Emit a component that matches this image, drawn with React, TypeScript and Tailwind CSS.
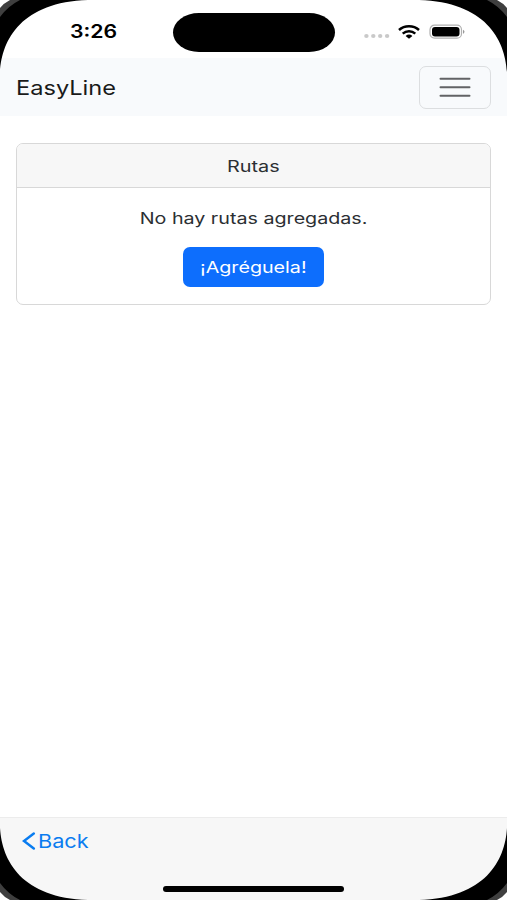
import { useState } from "react";

const corners = [
  "top-0 left-0",
  "top-0 right-0 -scale-x-100",
  "bottom-0 left-0 -scale-y-100",
  "bottom-0 right-0 -scale-100",
];

function Corner({ className }: { className: string }) {
  return (
    <svg className={`absolute pointer-events-none w-[100px] h-[76px] ${className}`} viewBox="0 0 100 76" fill="none">
      <path d="M0 72C2 39 22 2 88 0H0Z" fill="#000" />
      <path d="M0 17Q8 6 20 0H0Z" fill="#3f3f3f" />
      <path d="M0 8Q4 3 10 0H0Z" fill="#fff" />
    </svg>
  );
}

function StatusBar() {
  return (
    <div className="flex items-center h-[58px]">
      <div className="w-[173px] pl-[70px] pt-[6px]">
        <span className="inline-block origin-left scale-x-[1.18] text-[18px] leading-6 font-semibold text-black">3:26</span>
      </div>
      <div className="w-[162px] h-[39px] mt-[6px] rounded-[26px/19.5px] bg-black" />
      <div className="flex items-center ml-[29px] mt-[5px]">
        <svg width="26" height="6" viewBox="0 0 26 6" fill="#c9c9c9" className="mt-[9px]">
          <ellipse cx="2.4" cy="3" rx="2.2" ry="2" />
          <ellipse cx="9.3" cy="3" rx="2.2" ry="2" />
          <ellipse cx="16.2" cy="3" rx="2.2" ry="2" />
          <ellipse cx="23.1" cy="3" rx="2.2" ry="2" />
        </svg>
        <svg width="22" height="14" viewBox="0 0 22 14" fill="none" stroke="#000" strokeWidth="2.5" className="ml-[8px]">
          <path d="M1 5C6.5 .1 15.5 .1 21 5" />
          <path d="M4.7 8.6C8.3 5.4 13.7 5.4 17.3 8.6" />
          <path d="M7.6 10.9Q11 8.2 14.4 10.9L11 13.7Z" fill="#000" stroke="none" />
        </svg>
        <svg width="37" height="16" viewBox="0 0 37 16" fill="none" className="ml-[9px]">
          <rect x="1" y="1.2" width="31.5" height="13" rx="4.5" stroke="#b0b0b0" strokeWidth="1.2" />
          <rect x="3" y="3" width="27.5" height="9.6" rx="3" fill="#000" />
          <path d="M34 5.7Q37 7.7 34 9.9Z" fill="#999" />
        </svg>
      </div>
    </div>
  );
}

export default function App() {
  const [open, setOpen] = useState(false);

  return (
    <div className="relative flex flex-col w-full h-screen overflow-hidden bg-white text-[#2b2f33] font-['Inter',sans-serif]">
      <StatusBar />
      <nav className="flex items-center justify-between h-[58px] px-4 bg-[#f8fafc]">
        <a href="#" className="inline-block origin-left scale-x-[1.18] mt-[2px] text-[20px] leading-7 text-[#1a1a1a]">EasyLine</a>
        <button
          aria-label="Menu"
          onClick={() => setOpen(!open)}
          className="flex items-center justify-center w-[72px] h-[43px] rounded-[7px] border border-[#dcdee0]"
        >
          <svg width="32" height="22" viewBox="0 0 32 22" stroke="#626365" strokeWidth="2" strokeLinecap="round">
            <path d="M1.5 2.7H30.5M1.5 11.2H30.5M1.5 19.7H30.5" />
          </svg>
        </button>
      </nav>

      <main className="flex-1 px-4 pt-[27px]">
        <div className="h-[162px] rounded-[7px] border border-[#d8d8d8] overflow-hidden text-center text-[16px] leading-6">
          <div className="h-[44px] pt-[10px] border-b border-[#d8d8d8] bg-[#f7f7f7]">
            <span className="inline-block scale-x-[1.24]">Rutas</span>
          </div>
          <div className="flex flex-col items-center pt-[18px]">
            <p className="scale-x-[1.23]">No hay rutas agregadas.</p>
            <button className="mt-[17px] w-[141px] h-10 rounded-[7px] bg-[#0d6efd] text-white">
              <span className="inline-block scale-x-[1.23]">¡Agréguela!</span>
            </button>
          </div>
        </div>
      </main>

      <footer className="flex flex-col h-[83px] border-t border-[#ececec] bg-[#f7f7f7]">
        <button className="flex items-center self-start ml-[22px] mt-[8px] text-[#0a7cf0]">
          <svg width="14" height="18" viewBox="0 0 14 18" fill="none" stroke="currentColor" strokeWidth="2.5" strokeLinecap="round">
            <path d="M11.8 1.5L2 9L11.8 16.5" />
          </svg>
          <span className="inline-block origin-left scale-x-[1.14] ml-[2px] mt-[2px] text-[19px] leading-7">Back</span>
        </button>
        <div className="self-center mt-auto mb-[8px] w-[181px] h-[6px] rounded-full bg-black" />
      </footer>

      {corners.map(c => <Corner key={c} className={c} />)}
    </div>
  );
}
